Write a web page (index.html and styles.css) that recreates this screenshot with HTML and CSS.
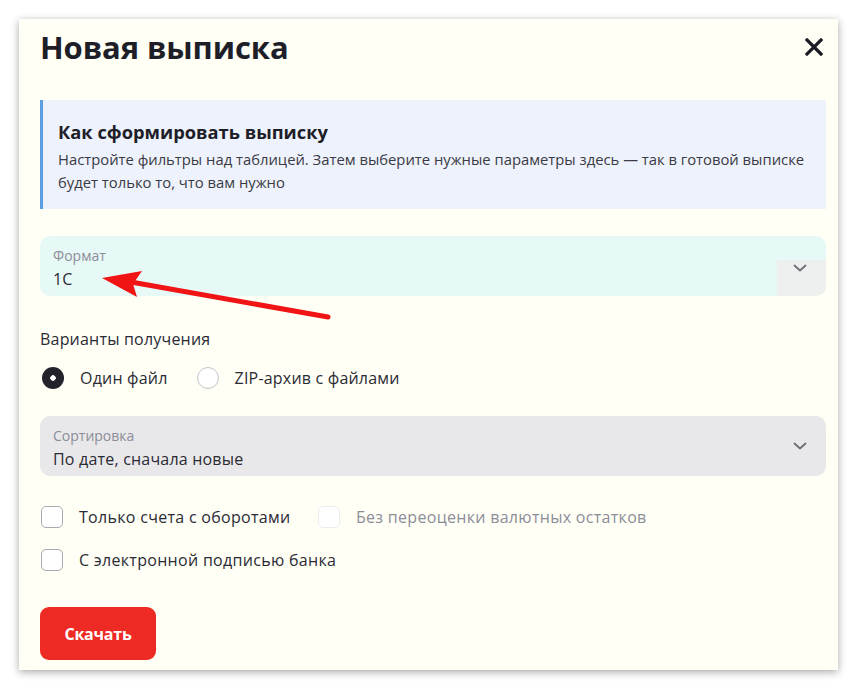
FILE: index.html
```html
<!DOCTYPE html>
<html lang="ru">
<head>
<meta charset="utf-8">
<title>Новая выписка</title>
<link rel="stylesheet" href="styles.css">
</head>
<body>
<div class="modal">
  <div class="head">
    <h1 class="title">Новая выписка</h1>
    <button class="close" aria-label="Закрыть">
      <svg width="18" height="18" viewBox="0 0 18 18"><path d="M2 2L16 16M16 2L2 16" stroke="#1c1c24" stroke-width="3.2" stroke-linecap="square" fill="none"/></svg>
    </button>
  </div>

  <div class="info">
    <div class="info-title">Как сформировать выписку</div>
    <div class="info-text">Настройте фильтры над таблицей. Затем выберите нужные параметры здесь — так в готовой выписке будет только то, что вам нужно</div>
  </div>

  <div class="field field-format">
    <div class="field-body">
      <div class="field-label">Формат</div>
      <div class="field-value">1C</div>
    </div>
    <div class="chev chev-boxed">
      <svg width="14" height="8" viewBox="0 0 14 8"><path d="M1.5 1.5L7 6.5L12.5 1.5" stroke="#6e6e7a" stroke-width="1.8" fill="none" stroke-linecap="round" stroke-linejoin="round"/></svg>
    </div>
  </div>

  <div class="section-title">Варианты получения</div>
  <div class="radios">
    <label class="radio"><span class="dot dot-on"></span>Один файл</label>
    <label class="radio"><span class="dot"></span>ZIP-архив с файлами</label>
  </div>

  <div class="field field-sort">
    <div class="field-body">
      <div class="field-label">Сортировка</div>
      <div class="field-value">По дате, сначала новые</div>
    </div>
    <div class="chev">
      <svg width="14" height="8" viewBox="0 0 14 8"><path d="M1.5 1.5L7 6.5L12.5 1.5" stroke="#6e6e7a" stroke-width="1.8" fill="none" stroke-linecap="round" stroke-linejoin="round"/></svg>
    </div>
  </div>

  <div class="checks">
    <div class="check-row">
      <label class="check check-first"><span class="box"></span>Только счета с оборотами</label>
      <label class="check check-off"><span class="box"></span>Без переоценки валютных остатков</label>
    </div>
    <div class="check-row">
      <label class="check"><span class="box"></span>С электронной подписью банка</label>
    </div>
  </div>

  <button class="download">Скачать</button>

  <svg class="arrow" width="819" height="651" viewBox="0 0 819 651">
    <line x1="309" y1="298" x2="112" y2="263" stroke="#f01414" stroke-width="5" stroke-linecap="round"/>
    <polygon points="83,259 123,252 114,265 118,278" fill="#f01414"/>
  </svg>
</div>
</body>
</html>
```

FILE: styles.css
```css
* { box-sizing: border-box; }
html, body { margin: 0; padding: 0; }
body {
  background: #ffffff;
  font-family: "Open Sans", "Noto Sans", sans-serif;
  color: #2b2b35;
  width: 858px;
  height: 690px;
  overflow: hidden;
}
.modal {
  position: relative;
  margin: 19px 0 0 19px;
  width: 819px;
  height: 651px;
  background: #fffff5;
  box-shadow: 0 2px 8px rgba(0,0,0,0.35);
  padding: 8px 12px 0 21px;
  display: flex;
  flex-direction: column;
}
.head {
  display: flex;
  align-items: center;
  justify-content: space-between;
  height: 40px;
}
.title {
  margin: 0;
  font-size: 31px;
  line-height: 40px;
  font-weight: 700;
  color: #1e1e28;
  letter-spacing: -0.1px;
}
.close {
  border: 0;
  background: transparent;
  padding: 0;
  margin-right: 3px;
  width: 18px;
  height: 18px;
  display: flex;
}
.info {
  margin-top: 33px;
  background: #eef2fc;
  border-left: 3px solid #5a9fe0;
  padding: 19px 14px 17px 15px;
  height: 109px;
}
.info-title {
  font-size: 18.3px;
  font-weight: 700;
  line-height: 26px;
  color: #1e1e28;
}
.info-text {
  margin-top: 3px;
  font-size: 14.8px;
  line-height: 23px;
  color: #3a3a44;
}
.field {
  border-radius: 10px;
  height: 60px;
  display: flex;
  align-items: stretch;
  padding-left: 13px;
}
.field-format {
  margin-top: 27px;
  background: #e7f9f6;
}
.field-sort {
  margin-top: 27px;
  background: #e8e8ea;
}
.field-body {
  flex: 1;
  display: flex;
  flex-direction: column;
  justify-content: flex-start;
  padding-top: 10px;
}
.field-label {
  font-size: 14px;
  line-height: 19px;
  color: #8c8c98;
}
.field-value {
  margin-top: 3px;
  font-size: 16px;
  line-height: 22px;
  color: #2b2b35;
  letter-spacing: 0.2px;
}
.chev {
  width: 49px;
  display: flex;
  align-items: center;
  justify-content: center;
  padding-right: 4px;
}
.chev-boxed {
  align-self: flex-end;
  height: 36px;
  background: #eef0f0;
  border-radius: 0 0 10px 0;
  align-items: flex-start;
  padding-top: 4px;
}
.section-title {
  margin-top: 32px;
  font-size: 16px;
  line-height: 22px;
  color: #2b2b35;
  letter-spacing: 0.2px;
}
.radios {
  margin-top: 17px;
  display: flex;
  gap: 29px;
  height: 22px;
  align-items: center;
}
.radio {
  display: flex;
  align-items: center;
  font-size: 16px;
  color: #2b2b35;
  letter-spacing: 0.2px;
}
.dot {
  width: 22px;
  height: 22px;
  border-radius: 50%;
  border: 1.5px solid #c4c4cc;
  background: #ffffff;
  margin-right: 16px;
  flex: none;
}
.dot-on {
  border: 0;
  background: radial-gradient(circle, #ffffff 0 2.5px, #23232c 3px);
  margin-left: 2px;
}
.checks {
  margin-top: 30px;
  display: flex;
  flex-direction: column;
  gap: 21px;
}
.check-row {
  display: flex;
  height: 22px;
  align-items: center;
}
.check {
  display: flex;
  align-items: center;
  font-size: 16px;
  color: #2b2b35;
  letter-spacing: 0.3px;
}
.check-first { width: 277px; }
.check-off { color: #8d8d99; }
.box {
  width: 22px;
  height: 22px;
  border: 1.5px solid #a8a8b0;
  border-radius: 5px;
  background: #ffffff;
  margin: 0 16px 0 1px;
  flex: none;
}
.check-off .box { border-color: #ececf0; }
.download {
  margin-top: 36px;
  width: 116px;
  height: 53px;
  border: 0;
  border-radius: 9px;
  background: #ee2a24;
  color: #ffffff;
  font-family: "Open Sans", "Noto Sans", sans-serif;
  font-size: 16px;
  font-weight: 700;
  letter-spacing: -0.2px;
}
.arrow {
  position: absolute;
  left: 0;
  top: 0;
  pointer-events: none;
}
```
